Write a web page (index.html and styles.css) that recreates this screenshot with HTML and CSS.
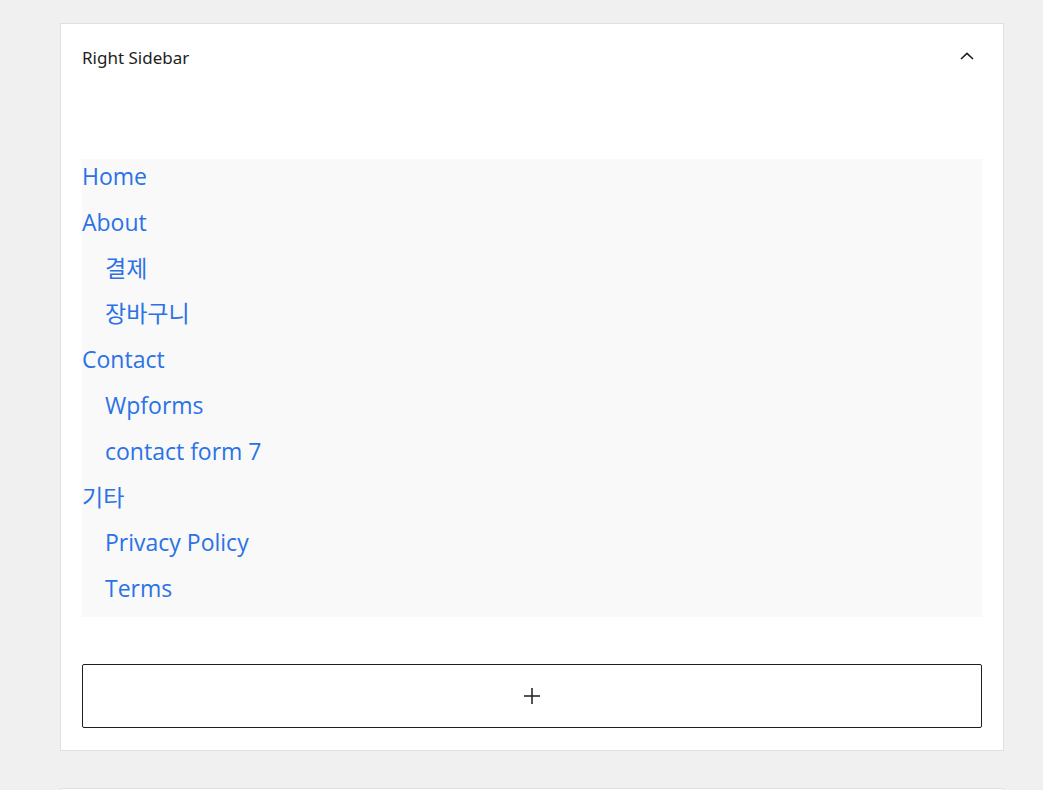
FILE: index.html
```html
<!DOCTYPE html>
<html lang="ko">
<head>
<meta charset="utf-8">
<link rel="stylesheet" href="styles.css">
</head>
<body>
<div class="page">
  <section class="panel">
    <div class="panel-head">
      <h2 class="panel-title">Right Sidebar</h2>
      <button class="toggle" aria-label="Collapse">
        <svg width="24" height="24" viewBox="0 0 24 24"><path d="M6 13 12 7.4 18 13" fill="none" stroke="#1e1e1e" stroke-width="1.6"/></svg>
      </button>
    </div>
    <div class="panel-body">
      <ul class="nav">
        <li><a href="#">Home</a></li>
        <li><a href="#">About</a>
          <ul class="sub">
            <li><a href="#">결제</a></li>
            <li><a href="#">장바구니</a></li>
          </ul>
        </li>
        <li><a href="#">Contact</a>
          <ul class="sub">
            <li><a href="#">Wpforms</a></li>
            <li><a href="#">contact form 7</a></li>
          </ul>
        </li>
        <li><a href="#">기타</a>
          <ul class="sub">
            <li><a href="#">Privacy Policy</a></li>
            <li><a href="#">Terms</a></li>
          </ul>
        </li>
      </ul>
      <button class="adder" aria-label="Add block">
        <svg width="24" height="24" viewBox="0 0 24 24"><path d="M11.25 4h1.5v7.25H20v1.5h-7.25V20h-1.5v-7.25H4v-1.5h7.25z" fill="#1e1e1e"/></svg>
      </button>
    </div>
  </section>
  <section class="panel next"></section>
</div>
</body>
</html>
```
FILE: styles.css
```css
html, body {
  margin: 0;
  padding: 0;
}
body {
  background: #f0f0f0;
  font-family: "Noto Sans", "Open Sans", "Noto Sans CJK KR", sans-serif;
}
.page {
  padding: 23px 39px 0 60px;
  display: flex;
  flex-direction: column;
  gap: 37px;
}
.panel {
  background: #fff;
  border: 1px solid #e0e0e0;
}
.panel.next {
  height: 40px;
}
.panel-head {
  display: flex;
  align-items: center;
  justify-content: space-between;
  height: 67px;
  padding: 0 24px 0 21px;
}
.panel-title {
  margin: 0;
  font-size: 17px;
  font-weight: 400;
  color: #1e1e1e;
}
.toggle {
  border: 0;
  background: none;
  padding: 0;
  width: 24px;
  height: 24px;
  display: flex;
  align-items: center;
  justify-content: center;
}
.panel-body {
  padding: 68px 21px 22px 21px;
}
.nav, .sub {
  list-style: none;
  margin: 0;
  padding: 0;
}
.nav {
  background: #f9f9f9;
  font-family: "Open Sans", "Noto Sans CJK KR", sans-serif;
  font-size: 23px;
}
.sub {
  padding-left: 23px;
}
.nav a {
  display: block;
  line-height: 35.8px;
  padding-bottom: 10px;
  color: #2b72e6;
  text-decoration: none;
}
.adder {
  margin-top: 47px;
  width: 100%;
  height: 64px;
  border: 1px solid #1e1e1e;
  border-radius: 2px;
  background: #fff;
  display: flex;
  align-items: center;
  justify-content: center;
  padding: 0;
}
```
